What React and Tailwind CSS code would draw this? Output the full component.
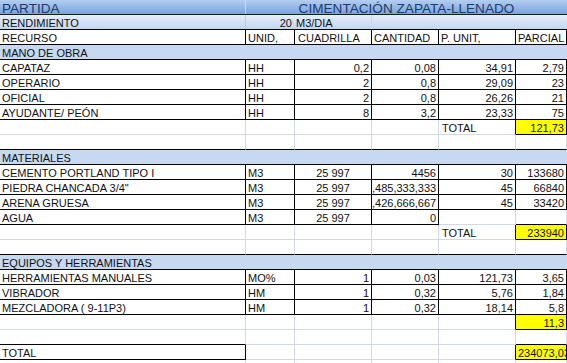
import React from "react";

// column widths (each includes its right grid line)
const W = { A: "w-[246px]", B: "w-[49px]", C: "w-[77px]", D: "w-[67px]", E: "w-[77px]", F: "w-[51px]" };

const RIGHT = {
    k: "border-r border-r-black",
    g: "border-r border-r-[#d0d7e5]",
    n: "",
};
const BOTTOM = {
    k: "border-b border-b-black",
    g: "border-b border-b-[#d0d7e5]",
    n: "",
};
const ALIGN = {
    l: "text-left pl-[2px]",
    r: "text-right pr-[2px]",
    c: "text-center",
};

const Cell = ({ text = "", col, r = "g", b = "g", al = "l", yellow, extra = "" }) => (
    <div
        className={`${W[col]} h-[15px] shrink-0 overflow-hidden whitespace-nowrap leading-[16px] ${RIGHT[r]} ${BOTTOM[b]} ${ALIGN[al]} ${yellow ? "bg-[#ffff00]" : ""} ${extra}`}
    >
        {text}
    </div>
);

const Row = ({ children }) => <div className="flex h-[15px]">{children}</div>;

const Section = ({ label }) => (
    <div className="h-[15px] bg-[#c6d9f1] border-b border-b-black pl-[2px] leading-[16px] whitespace-nowrap">{label}</div>
);

const Blank = ({ b = "g" }) => (
    <Row>
        {["A", "B", "C", "D", "E", "F"].map((c) => (
            <Cell key={c} col={c} r="g" b={b} />
        ))}
    </Row>
);

// fully bordered data row: recurso, unid, cuadrilla, cantidad, p.unit, parcial
const DataRow = ({ d, center }) => (
    <Row>
        <Cell col="A" r="k" b="k" text={d[0]} />
        <Cell col="B" r="k" b="k" text={d[1]} />
        <Cell col="C" r="k" b="k" al={center ? "c" : "r"} text={d[2]} />
        <Cell col="D" r="k" b="k" al="r" text={d[3]} />
        <Cell col="E" r="k" b="k" al="r" text={d[4]} />
        <Cell col="F" r="k" b="k" al="r" text={d[5]} />
    </Row>
);

const TotalRow = ({ value, label = "TOTAL" }) => (
    <Row>
        <Cell col="A" />
        <Cell col="B" />
        <Cell col="C" />
        <Cell col="D" />
        <Cell col="E" r="k" text={label} extra="pl-[3px]" />
        <Cell col="F" r="k" b="k" al="r" yellow text={value} />
    </Row>
);

export default function App() {
    return (
        <div
            className="w-[567px] h-[363px] overflow-hidden bg-white text-[11px] text-[#111]"
            style={{ fontFamily: '"Liberation Sans", Arial, sans-serif' }}
        >
            {/* title */}
            <div className="flex h-[15px] bg-gradient-to-b from-[#b3cef1] to-[#7ba3db] border-b border-b-[#1b1b1b] text-[13.6px] text-[#1d3a68] leading-[17px]">
                <div className="w-[246px] shrink-0 border-r border-r-[#c9daf1] pl-[2px]">PARTIDA</div>
                <div className="flex-1 text-center whitespace-nowrap">CIMENTACIÓN ZAPATA-LLENADO</div>
            </div>

            {/* rendimiento */}
            <div className="flex h-[15px] bg-gradient-to-b from-[#e6eefa] to-[#c3d6f0] border-b border-b-black leading-[16px]">
                <div className="w-[246px] shrink-0 border-r border-r-[#b9cce6] pl-[2px]">RENDIMIENTO</div>
                <div className="w-[49px] shrink-0 text-right pr-[3px]">20</div>
                <div className="w-[77px] shrink-0 border-r border-r-[#c9d8ec] pl-[1px]">M3/DIA</div>
                <div className="flex-1"></div>
            </div>

            <Row>
                <Cell col="A" r="k" b="k" text="RECURSO" />
                <Cell col="B" r="k" b="k" text="UNID," />
                <Cell col="C" r="k" b="k" text="CUADRILLA" extra="pl-[3px]" />
                <Cell col="D" r="k" b="k" text="CANTIDAD" />
                <Cell col="E" r="k" b="k" text="P. UNIT," />
                <Cell col="F" r="k" b="k" text="PARCIAL" />
            </Row>

            <Section label="MANO DE OBRA" />
            <DataRow d={["CAPATAZ", "HH", "0,2", "0,08", "34,91", "2,79"]} />
            <DataRow d={["OPERARIO", "HH", "2", "0,8", "29,09", "23"]} />
            <DataRow d={["OFICIAL", "HH", "2", "0,8", "26,26", "21"]} />
            <DataRow d={["AYUDANTE/ PEÓN", "HH", "8", "3,2", "23,33", "75"]} />
            <TotalRow value="121,73" />
            <Blank b="k" />

            <Section label="MATERIALES" />
            <DataRow center d={["CEMENTO PORTLAND TIPO I", "M3", "25 997", "4456", "30", "133680"]} />
            <DataRow center d={["PIEDRA CHANCADA 3/4\"", "M3", "25 997", ",485,333,333", "45", "66840"]} />
            <DataRow center d={["ARENA GRUESA", "M3", "25 997", ",426,666,667", "45", "33420"]} />
            <Row>
                <Cell col="A" r="k" b="k" text="AGUA" />
                <Cell col="B" r="k" b="k" text="M3" />
                <Cell col="C" r="k" b="k" al="c" text="25 997" />
                <Cell col="D" r="k" b="k" al="r" text="0" />
                <Cell col="E" />
                <Cell col="F" b="k" />
            </Row>
            <TotalRow value="233940" />
            <Blank b="k" />

            <Section label="EQUIPOS Y HERRAMIENTAS" />
            <DataRow d={["HERRAMIENTAS MANUALES", "MO%", "1", "0,03", "121,73", "3,65"]} />
            <DataRow d={["VIBRADOR", "HM", "1", "0,32", "5,76", "1,84"]} />
            <DataRow d={["MEZCLADORA ( 9-11P3)", "HM", "1", "0,32", "18,14", "5,8"]} />
            <TotalRow value="11,3" label="" />
            <Row>
                <Cell col="A" b="k" />
                <Cell col="B" />
                <Cell col="C" />
                <Cell col="D" />
                <Cell col="E" />
                <Cell col="F" b="k" />
            </Row>
            <Row>
                <Cell col="A" r="k" b="k" text="TOTAL" />
                <Cell col="B" />
                <Cell col="C" />
                <Cell col="D" />
                <Cell col="E" r="k" />
                <Cell col="F" r="k" b="k" yellow text="234073,03" extra="overflow-visible" />
            </Row>
            <Blank />
        </div>
    );
}
